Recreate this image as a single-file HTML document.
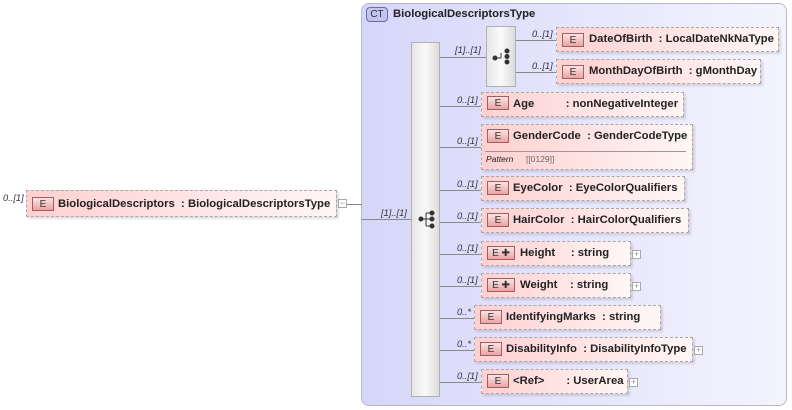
<!DOCTYPE html>
<html><head><meta charset="utf-8">
<style>
body{margin:0;width:792px;height:410px;background:#fff;position:relative;overflow:hidden;font-family:"Liberation Sans",Arial,sans-serif;}
.a{position:absolute}
.ct{left:361px;top:3px;width:426px;height:403px;border:1px solid #b8b8c8;border-radius:8px;background:linear-gradient(to right,#d6d6fa,#f4f4fe);box-sizing:border-box}
.ctl{left:366px;top:7px;width:20px;height:13px;border:1px solid #6a6aa8;border-radius:4px;background:#c4c4f0;font-size:10px;line-height:13px;text-align:center;color:#333}
.t{font-size:11.3px;font-weight:bold;color:#222;white-space:pre;margin-top:1px}
.el{border:1px dashed #a8a8a8;box-sizing:border-box;background:linear-gradient(to right,#ffd0d0,#fff6f6);box-shadow:2px 2px 2px rgba(0,0,0,.12)}
.b{width:22px;height:14px;border:1px solid #a06060;box-sizing:border-box;background:linear-gradient(#fbe4e4,#eaa4a4);font-size:10px;line-height:13px;text-align:center;color:#333}
.bp{width:28px}
.m{font-size:9.3px;font-style:italic;color:#333;white-space:pre}
.ln{background:#888;height:1px}
.bar{background:linear-gradient(to right,#e6e6e6,#fafafa 50%,#dcdcdc);border:1px solid #b0b0b0;box-sizing:border-box}
.pl{width:9px;height:9px;border:1px solid #a8a8a8;box-sizing:border-box;background:#fff;font-size:9px;line-height:7px;text-align:center;color:#999}
</style></head><body>
<div class="a ct"></div>
<div class="a ctl">CT</div>
<div class="a t" style="left:393px;top:7px">BiologicalDescriptorsType</div>

<div class="a m" style="left:3px;top:193px">0..[1]</div>
<div class="a el" style="left:26px;top:190px;width:311px;height:27px"></div>
<div class="a b" style="left:32px;top:197px">E</div>
<div class="a t" style="left:58px;top:197px">BiologicalDescriptors  : BiologicalDescriptorsType</div>
<div class="a pl" style="left:338px;top:199px">−</div>
<div class="a ln" style="left:347px;top:204px;width:15px"></div>
<div class="a ln" style="left:362px;top:219px;width:49px"></div>
<div class="a m" style="left:381px;top:208px">[1]..[1]</div>

<div class="a bar" style="left:411px;top:42px;width:29px;height:355px"></div>
<svg class="a" style="left:418px;top:210px" width="18" height="20"><g fill="#333" stroke="#333"><circle cx="3" cy="9" r="2"/><line x1="3" y1="9" x2="8" y2="9"/><line x1="8" y1="3" x2="8" y2="16"/><line x1="8" y1="3" x2="14" y2="3"/><line x1="8" y1="9" x2="14" y2="9"/><line x1="8" y1="16" x2="14" y2="16"/><circle cx="14" cy="3" r="2"/><circle cx="14" cy="9" r="2"/><circle cx="14" cy="16" r="2"/></g></svg>

<div class="a ln" style="left:440px;top:57px;width:46px"></div>
<div class="a m" style="left:455px;top:45px">[1]..[1]</div>
<div class="a bar" style="left:486px;top:26px;width:30px;height:61px"></div>
<svg class="a" style="left:492px;top:47px" width="20" height="20"><g fill="#333" stroke="#333"><circle cx="3" cy="11" r="2"/><line x1="3" y1="11" x2="9" y2="11"/><line x1="9" y1="11" x2="9" y2="6"/><circle cx="15" cy="4" r="2"/><circle cx="15" cy="9.5" r="2"/><circle cx="15" cy="15" r="2"/></g></svg>
<div class="a ln" style="left:516px;top:40px;width:40px"></div>
<div class="a ln" style="left:516px;top:72px;width:40px"></div>
<div class="a m" style="left:532px;top:29px">0..[1]</div>
<div class="a m" style="left:532px;top:61px">0..[1]</div>
<div class="a el" style="left:556px;top:27px;width:223px;height:25px"></div>
<div class="a b" style="left:562px;top:33px">E</div>
<div class="a t" style="left:589px;top:32px">DateOfBirth  : LocalDateNkNaType</div>
<div class="a el" style="left:556px;top:59px;width:205px;height:25px"></div>
<div class="a b" style="left:562px;top:65px">E</div>
<div class="a t" style="left:589px;top:64px">MonthDayOfBirth  : gMonthDay</div>

<div class="a ln" style="left:440px;top:106px;width:41px"></div>
<div class="a m" style="left:457px;top:95px">0..[1]</div>
<div class="a el" style="left:481px;top:92px;width:203px;height:25px"></div>
<div class="a b" style="left:487px;top:96px">E</div>
<div class="a t" style="left:513px;top:97px">Age          : nonNegativeInteger</div>

<div class="a ln" style="left:440px;top:147px;width:41px"></div>
<div class="a m" style="left:457px;top:136px">0..[1]</div>
<div class="a el" style="left:481px;top:124px;width:212px;height:46px"></div>
<div class="a b" style="left:487px;top:129px">E</div>
<div class="a t" style="left:513px;top:129px">GenderCode  : GenderCodeType</div>
<div class="a" style="left:485px;top:151px;width:201px;height:1px;background:#999"></div>
<div class="a" style="left:486px;top:154px;font-size:8.5px;font-style:italic;color:#222">Pattern</div>
<div class="a" style="left:526px;top:154px;font-size:8.5px;color:#666">[[0129]]</div>

<div class="a ln" style="left:440px;top:190px;width:41px"></div>
<div class="a m" style="left:457px;top:179px">0..[1]</div>
<div class="a el" style="left:481px;top:176px;width:204px;height:25px"></div>
<div class="a b" style="left:487px;top:181px">E</div>
<div class="a t" style="left:513px;top:181px">EyeColor  : EyeColorQualifiers</div>

<div class="a ln" style="left:440px;top:222px;width:41px"></div>
<div class="a m" style="left:457px;top:211px">0..[1]</div>
<div class="a el" style="left:481px;top:208px;width:208px;height:25px"></div>
<div class="a b" style="left:487px;top:213px">E</div>
<div class="a t" style="left:513px;top:213px">HairColor  : HairColorQualifiers</div>

<div class="a ln" style="left:440px;top:254px;width:41px"></div>
<div class="a m" style="left:457px;top:243px">0..[1]</div>
<div class="a el" style="left:481px;top:241px;width:150px;height:25px"></div>
<div class="a b bp" style="left:487px;top:246px">E ✚</div>
<div class="a t" style="left:520px;top:246px">Height     : string</div>
<div class="a pl" style="left:632px;top:250px">+</div>

<div class="a ln" style="left:440px;top:286px;width:41px"></div>
<div class="a m" style="left:457px;top:275px">0..[1]</div>
<div class="a el" style="left:481px;top:273px;width:150px;height:25px"></div>
<div class="a b bp" style="left:487px;top:278px">E ✚</div>
<div class="a t" style="left:520px;top:278px">Weight    : string</div>
<div class="a pl" style="left:632px;top:282px">+</div>

<div class="a ln" style="left:440px;top:318px;width:34px"></div>
<div class="a m" style="left:457px;top:307px">0..*</div>
<div class="a el" style="left:474px;top:305px;width:187px;height:25px"></div>
<div class="a b" style="left:480px;top:310px">E</div>
<div class="a t" style="left:506px;top:310px">IdentifyingMarks  : string</div>

<div class="a ln" style="left:440px;top:350px;width:34px"></div>
<div class="a m" style="left:457px;top:339px">0..*</div>
<div class="a el" style="left:474px;top:337px;width:219px;height:25px"></div>
<div class="a b" style="left:480px;top:342px">E</div>
<div class="a t" style="left:506px;top:342px">DisabilityInfo  : DisabilityInfoType</div>
<div class="a pl" style="left:694px;top:346px">+</div>

<div class="a ln" style="left:440px;top:382px;width:41px"></div>
<div class="a m" style="left:457px;top:371px">0..[1]</div>
<div class="a el" style="left:481px;top:369px;width:147px;height:25px"></div>
<div class="a b" style="left:487px;top:374px">E</div>
<div class="a t" style="left:513px;top:374px">&lt;Ref&gt;       : UserArea</div>
<div class="a pl" style="left:629px;top:378px">+</div>
</body></html>
